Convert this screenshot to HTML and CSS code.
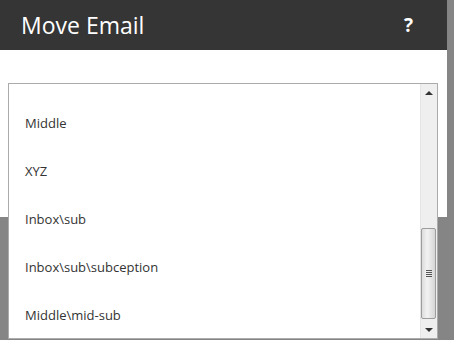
FILE: index.html
```html
<!DOCTYPE html>
<html lang="en">
<head>
    <meta charset="UTF-8">
    <title>Move Email</title>
    <link rel="stylesheet" href="styles.css">
</head>
<body>
    <div class="dialog">
        <header class="dialog-header">
            <h1>Move Email</h1>
            <span class="help">?</span>
        </header>
        <div class="dialog-body">
            <div class="folder-list">
                <ul class="folders">
                    <li>Middle</li>
                    <li>XYZ</li>
                    <li>Inbox\sub</li>
                    <li>Inbox\sub\subception</li>
                    <li>Middle\mid-sub</li>
                </ul>
                <div class="scrollbar">
                    <div class="arrow up"></div>
                    <div class="track">
                        <div class="thumb"><span class="grip"></span></div>
                    </div>
                    <div class="arrow down"></div>
                </div>
            </div>
        </div>
    </div>
</body>
</html>
```

FILE: styles.css
```css
/* Page */
body {
    margin: 0;
    padding: 0;
    background: #858585;
    font-family: 'Open Sans', 'Noto Sans', sans-serif;
    overflow: hidden;
    height: 340px;
}

.dialog {
    width: 447px;
    height: 217px;
    background: #fff;
}

.dialog-header {
    height: 50px;
    background: #353535;
    color: #fff;
    display: flex;
    align-items: center;
    justify-content: space-between;
    padding: 0 34px 0 21px;
}

.dialog-header h1 {
    margin: 0;
    font-size: 23px;
    font-weight: normal;
}

.help {
    font-size: 19px;
    font-weight: bold;
}

.dialog-body {
    padding: 33px 9px 0 8px;
}

/* Folder list */
.folder-list {
    display: flex;
    height: 254px;
    border: 1px solid #ababab;
    background: #fff;
}

.folders {
    flex: 1;
    list-style: none;
    margin: 0;
    padding: 15px 0 0;
}

.folders li {
    height: 48px;
    line-height: 48px;
    padding-left: 16px;
    font-size: 13px;
    color: #333;
}

/* Scrollbar */
.scrollbar {
    width: 16px;
    background: #efefef;
    border-left: 1px solid #e4e4e4;
    display: flex;
    flex-direction: column;
}

.arrow {
    height: 17px;
    display: flex;
    align-items: center;
    justify-content: center;
}

.arrow::before {
    content: '';
    border-left: 4px solid transparent;
    border-right: 4px solid transparent;
}

.arrow.up::before {
    border-bottom: 4px solid #333;
}

.arrow.down::before {
    border-top: 4px solid #333;
}

.track {
    flex: 1;
    display: flex;
    flex-direction: column;
    justify-content: flex-end;
    padding: 0 1px 2px 0;
}

.thumb {
    height: 89px;
    border: 1px solid #9c9c9c;
    border-radius: 2px;
    background: linear-gradient(to right, #dcdcdc, #f2f2f2 40%, #d6d6d6);
    display: flex;
    align-items: center;
    justify-content: center;
}

.grip {
    width: 6px;
    height: 7px;
    background: repeating-linear-gradient(to bottom, #555 0 1px, transparent 1px 2px);
}
```
